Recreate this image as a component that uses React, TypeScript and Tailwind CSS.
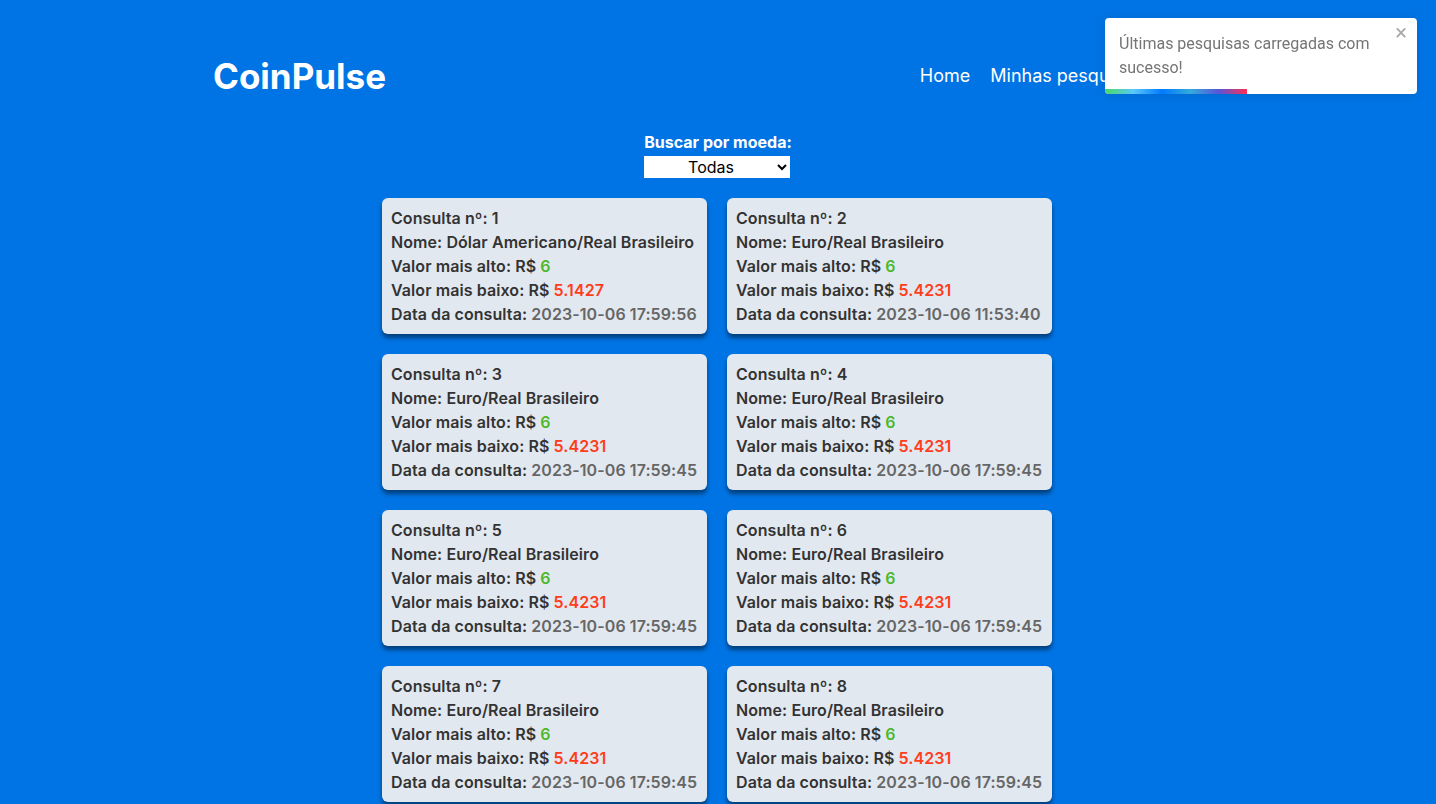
import React from "react";

type Consulta = {
  id: number;
  nome: string;
  alto: string;
  baixo: string;
  data: string;
};

const consultas: Consulta[] = [
  { id: 1, nome: "Dólar Americano/Real Brasileiro", alto: "6", baixo: "5.1427", data: "2023-10-06 17:59:56" },
  { id: 2, nome: "Euro/Real Brasileiro", alto: "6", baixo: "5.4231", data: "2023-10-06 11:53:40" },
  { id: 3, nome: "Euro/Real Brasileiro", alto: "6", baixo: "5.4231", data: "2023-10-06 17:59:45" },
  { id: 4, nome: "Euro/Real Brasileiro", alto: "6", baixo: "5.4231", data: "2023-10-06 17:59:45" },
  { id: 5, nome: "Euro/Real Brasileiro", alto: "6", baixo: "5.4231", data: "2023-10-06 17:59:45" },
  { id: 6, nome: "Euro/Real Brasileiro", alto: "6", baixo: "5.4231", data: "2023-10-06 17:59:45" },
  { id: 7, nome: "Euro/Real Brasileiro", alto: "6", baixo: "5.4231", data: "2023-10-06 17:59:45" },
  { id: 8, nome: "Euro/Real Brasileiro", alto: "6", baixo: "5.4231", data: "2023-10-06 17:59:45" },
];

const Card = ({ item }: { item: Consulta }) => {
  return (
    <div className="w-[325px] whitespace-nowrap rounded-md bg-[#e2e8f0] px-[9px] py-2 text-[16px] leading-6 font-semibold tracking-[0.08px] text-[#333] shadow-[0_4px_4px_rgba(0,0,0,0.45)]">
      <p>Consulta nº: {item.id}</p>
      <p>Nome: {item.nome}</p>
      <p>
        Valor mais alto: R$ <span className="text-[#4cb82a]">{item.alto}</span>
      </p>
      <p>
        Valor mais baixo: R$ <span className="text-[#ff3d1a]">{item.baixo}</span>
      </p>
      <p>
        Data da consulta: <span className="text-[#666]">{item.data}</span>
      </p>
    </div>
  );
};

const App = () => {
  return (
    <div className="min-h-screen bg-[#0074e4] font-['Inter',sans-serif]">
      <header className="mx-auto flex w-[1010px] items-center justify-between pt-[52px] pb-[32px]">
        <h1 className="text-[35px] font-bold leading-[48px] text-white">CoinPulse</h1>
        <nav className="-mt-[2px] flex gap-5 pr-[80px] text-[18px] text-white">
          <a>Home</a>
          <a>Minhas pesquisas</a>
        </nav>
      </header>

      <div className="flex flex-col items-center">
        <label className="text-[16px] font-bold leading-5 text-white">Buscar por moeda:</label>
        <select className="mt-[4px] h-[22px] w-[146px] -translate-x-px bg-white text-center text-[16px] text-black">
          <option>Todas</option>
        </select>
      </div>

      <div className="mx-auto mt-5 grid w-[670px] -translate-x-px grid-cols-2 gap-5">
        {consultas.map((c) => (
          <Card key={c.id} item={c} />
        ))}
      </div>

      <div className="fixed right-[19px] top-[18px] w-[312px] overflow-hidden rounded bg-white shadow-[0_1px_10px_rgba(0,0,0,0.1)] font-['Roboto',sans-serif]">
        <div className="flex items-start pt-[14px] pb-[9px] pl-[14px] pr-[10px]">
          <p className="flex-1 text-[16px] leading-[24px] text-[#757575]">
            Últimas pesquisas carregadas com sucesso!
          </p>
          <button className="-mt-[10px] text-[22px] leading-none text-[#a8a8a8]">×</button>
        </div>
        <div className="h-[5px] w-[142px] bg-[linear-gradient(to_right,#4cd964,#5ac8fa,#007aff,#34aadc,#5856d6,#ff2d55)]" />
      </div>
    </div>
  );
};

export default App;
